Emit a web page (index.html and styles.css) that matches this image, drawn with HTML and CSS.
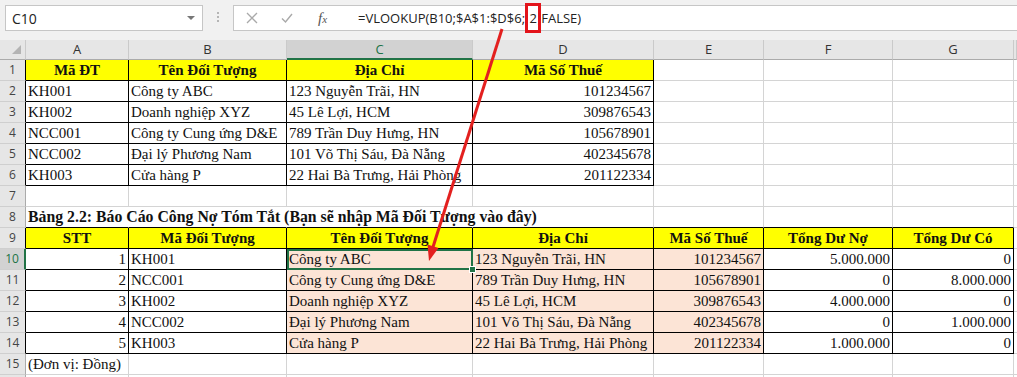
FILE: index.html
```html
<!DOCTYPE html>
<html lang="vi">
<head>
    <meta charset="UTF-8">
    <meta name="viewport" content="width=device-width, initial-scale=1.0">
    <title>Báo Cáo Công Nợ - VLOOKUP</title>
    <link rel="stylesheet" href="styles.css">
</head>
<body>

    <div class="page">
        <!-- Formula bar -->
        <div class="toolbar">
            <div class="name-box">
                <span>C10</span>
                <span class="caret"></span>
            </div>
            <div class="grip"><i></i><i></i><i></i></div>
            <div class="formula">
                <svg class="btn-x" width="12" height="12" viewBox="0 0 12 12"><path d="M1 1L11 11M11 1L1 11" stroke="#a9a9a9" stroke-width="1.3" fill="none"/></svg>
                <svg class="btn-ok" width="12" height="12" viewBox="0 0 12 12"><path d="M1 6.5L4.5 10L11 2" stroke="#a9a9a9" stroke-width="1.4" fill="none"/></svg>
                <span class="fx"><i>f</i><i class="x">x</i></span>
                <span class="ftext">=VLOOKUP(B10;$A$1:$D$6; <span class="hl">2</span>;FALSE)</span>
            </div>
        </div>

        <!-- Sheet -->
        <div class="sheet">
            <div class="row">
                <div class="ch corner"><span class="tri"></span></div>
                <div class="ch">A</div>
                <div class="ch">B</div>
                <div class="ch active">C</div>
                <div class="ch">D</div>
                <div class="ch">E</div>
                <div class="ch">F</div>
                <div class="ch">G</div>
                <div class="ch"></div>
            </div>

            <div class="row">
                <div class="c rh k">1</div>
                <div class="c b y">Mã ĐT</div>
                <div class="c b y">Tên Đối Tượng</div>
                <div class="c b y">Địa Chỉ</div>
                <div class="c b y">Mã Số Thuế</div>
                <div class="c"></div><div class="c"></div><div class="c"></div><div class="c"></div>
            </div>
            <div class="row">
                <div class="c rh k">2</div>
                <div class="c b">KH001</div>
                <div class="c b">Công ty ABC</div>
                <div class="c b">123 Nguyễn Trãi, HN</div>
                <div class="c b r">101234567</div>
                <div class="c"></div><div class="c"></div><div class="c"></div><div class="c"></div>
            </div>
            <div class="row">
                <div class="c rh k">3</div>
                <div class="c b">KH002</div>
                <div class="c b">Doanh nghiệp XYZ</div>
                <div class="c b">45 Lê Lợi, HCM</div>
                <div class="c b r">309876543</div>
                <div class="c"></div><div class="c"></div><div class="c"></div><div class="c"></div>
            </div>
            <div class="row">
                <div class="c rh k">4</div>
                <div class="c b">NCC001</div>
                <div class="c b">Công ty Cung ứng D&amp;E</div>
                <div class="c b">789 Trần Duy Hưng, HN</div>
                <div class="c b r">105678901</div>
                <div class="c"></div><div class="c"></div><div class="c"></div><div class="c"></div>
            </div>
            <div class="row">
                <div class="c rh k">5</div>
                <div class="c b">NCC002</div>
                <div class="c b">Đại lý Phương Nam</div>
                <div class="c b">101 Võ Thị Sáu, Đà Nẵng</div>
                <div class="c b r">402345678</div>
                <div class="c"></div><div class="c"></div><div class="c"></div><div class="c"></div>
            </div>
            <div class="row">
                <div class="c rh k">6</div>
                <div class="c b">KH003</div>
                <div class="c b">Cửa hàng P</div>
                <div class="c b">22 Hai Bà Trưng, Hải Phòng</div>
                <div class="c b r">201122334</div>
                <div class="c"></div><div class="c"></div><div class="c"></div><div class="c"></div>
            </div>
            <div class="row">
                <div class="c rh">7</div>
                <div class="c"></div><div class="c"></div><div class="c"></div><div class="c"></div>
                <div class="c"></div><div class="c"></div><div class="c"></div><div class="c"></div>
            </div>
            <div class="row">
                <div class="c rh">8</div>
                <div class="c bb ov title">Bảng 2.2: Báo Cáo Công Nợ Tóm Tắt (Bạn sẽ nhập Mã Đối Tượng vào đây)</div>
                <div class="c bb ov"></div>
                <div class="c bb ov"></div>
                <div class="c bb"></div>
                <div class="c bb"></div>
                <div class="c bb"></div>
                <div class="c bb"></div>
                <div class="c"></div>
            </div>

            <div class="row">
                <div class="c rh k">9</div>
                <div class="c b y">STT</div>
                <div class="c b y">Mã Đối Tượng</div>
                <div class="c b y">Tên Đối Tượng</div>
                <div class="c b y">Địa Chỉ</div>
                <div class="c b y">Mã Số Thuế</div>
                <div class="c b y">Tổng Dư Nợ</div>
                <div class="c b y">Tổng Dư Có</div>
                <div class="c"></div>
            </div>
            <div class="row">
                <div class="c rh k active">10</div>
                <div class="c b r">1</div>
                <div class="c b">KH001</div>
                <div class="c b p sel">Công ty ABC</div>
                <div class="c b p">123 Nguyễn Trãi, HN</div>
                <div class="c b p r">101234567</div>
                <div class="c b r">5.000.000</div>
                <div class="c b r">0</div>
                <div class="c"></div>
            </div>
            <div class="row">
                <div class="c rh k">11</div>
                <div class="c b r">2</div>
                <div class="c b">NCC001</div>
                <div class="c b p">Công ty Cung ứng D&amp;E</div>
                <div class="c b p">789 Trần Duy Hưng, HN</div>
                <div class="c b p r">105678901</div>
                <div class="c b r">0</div>
                <div class="c b r">8.000.000</div>
                <div class="c"></div>
            </div>
            <div class="row">
                <div class="c rh k">12</div>
                <div class="c b r">3</div>
                <div class="c b">KH002</div>
                <div class="c b p">Doanh nghiệp XYZ</div>
                <div class="c b p">45 Lê Lợi, HCM</div>
                <div class="c b p r">309876543</div>
                <div class="c b r">4.000.000</div>
                <div class="c b r">0</div>
                <div class="c"></div>
            </div>
            <div class="row">
                <div class="c rh k">13</div>
                <div class="c b r">4</div>
                <div class="c b">NCC002</div>
                <div class="c b p">Đại lý Phương Nam</div>
                <div class="c b p">101 Võ Thị Sáu, Đà Nẵng</div>
                <div class="c b p r">402345678</div>
                <div class="c b r">0</div>
                <div class="c b r">1.000.000</div>
                <div class="c"></div>
            </div>
            <div class="row">
                <div class="c rh k">14</div>
                <div class="c b r">5</div>
                <div class="c b">KH003</div>
                <div class="c b p">Cửa hàng P</div>
                <div class="c b p">22 Hai Bà Trưng, Hải Phòng</div>
                <div class="c b p r">201122334</div>
                <div class="c b r">1.000.000</div>
                <div class="c b r">0</div>
                <div class="c"></div>
            </div>
            <div class="row">
                <div class="c rh">15</div>
                <div class="c">(Đơn vị: Đồng)</div>
                <div class="c"></div><div class="c"></div><div class="c"></div>
                <div class="c"></div><div class="c"></div><div class="c"></div><div class="c"></div>
            </div>
            <div class="row">
                <div class="c rh"></div>
                <div class="c"></div><div class="c"></div><div class="c"></div><div class="c"></div>
                <div class="c"></div><div class="c"></div><div class="c"></div><div class="c"></div>
            </div>
        </div>

        <!-- Red arrow from the formula argument down to the selected cell -->
        <svg class="arrow" width="1017" height="377" viewBox="0 0 1017 377">
            <line x1="502" y1="29" x2="433" y2="247" stroke="#e3201f" stroke-width="3"/>
            <polygon points="429,261 438.5,248 427.5,244.5" fill="#e3201f"/>
        </svg>
    </div>

</body>
</html>
```

FILE: styles.css
```css
body {
    margin: 0;
    padding: 0;
    background-color: #f1f1f1;
}

.page {
    position: relative;
    width: 1017px;
    height: 377px;
    overflow: hidden;
    background-color: #f1f1f1;
}

/* formula bar */

.toolbar {
    display: flex;
    align-items: flex-start;
    height: 40px;
    padding: 5px 0 0 5px;
    box-sizing: border-box;
    font-family: "Open Sans", "Noto Sans", sans-serif;
}

.name-box {
    display: flex;
    align-items: center;
    justify-content: space-between;
    width: 198px;
    height: 26px;
    box-sizing: border-box;
    padding: 0 7px 0 6px;
    background-color: #fff;
    border: 1px solid #c6c6c6;
    font-size: 14px;
    color: #222;
}

.caret {
    width: 0;
    height: 0;
    border-left: 4px solid transparent;
    border-right: 4px solid transparent;
    border-top: 4px solid #777;
}

.grip {
    display: flex;
    flex-direction: column;
    gap: 2px;
    width: 30px;
    align-items: center;
    padding-top: 7px;
}

.grip i {
    width: 2px;
    height: 2px;
    background-color: #b5b5b5;
}

.formula {
    flex: 1;
    display: flex;
    align-items: center;
    height: 26px;
    box-sizing: border-box;
    background-color: #fff;
    border: 1px solid #c6c6c6;
    border-right: none;
}

.btn-x {
    margin-left: 12px;
}

.btn-ok {
    margin-left: 23px;
}

.fx {
    margin-left: 25px;
    width: 12px;
    font-family: "Liberation Serif", serif;
    color: #555;
}

.fx i {
    font-size: 15px;
}

.fx .x {
    font-size: 11px;
}

.ftext {
    margin-left: 28px;
    font-size: 13px;
    color: #222;
    white-space: nowrap;
}

.hl {
    outline: 3px solid #e3141b;
    padding: 3px 1px;
}

/* sheet */

.row {
    display: grid;
    grid-template-columns: 26px 103px 158px 186px 181px 110px 129px 121px 1fr;
}

.ch {
    height: 20px;
    box-sizing: border-box;
    background-color: #e6e6e6;
    border-right: 1px solid #cacaca;
    border-bottom: 1px solid #ababab;
    font-family: "Open Sans", "Noto Sans", sans-serif;
    font-size: 13px;
    line-height: 19px;
    text-align: center;
    color: #333;
}

.ch.active {
    background-color: #d2d2d2;
    color: #217346;
    border-bottom: 2px solid #217346;
}

.corner {
    display: flex;
    justify-content: flex-end;
    align-items: flex-end;
    padding: 0 4px 5px 0;
}

.tri {
    width: 9px;
    height: 9px;
    background-color: #b4b4b4;
    clip-path: polygon(100% 0, 100% 100%, 0 100%);
}

.c {
    height: 21px;
    box-sizing: border-box;
    padding: 0 2px;
    background-color: #fff;
    border-right: 1px solid #d4d4d4;
    border-bottom: 1px solid #d4d4d4;
    font-family: "Liberation Serif", "Times New Roman", serif;
    font-size: 15px;
    line-height: 20px;
    color: #111;
    white-space: nowrap;
}

.rh {
    padding: 0;
    background-color: #e6e6e6;
    border-right-color: #ababab;
    border-bottom-color: #cfcfcf;
    font-family: "Open Sans", "Noto Sans", sans-serif;
    font-size: 12px;
    text-align: center;
    color: #444;
}

.rh.k {
    border-right-color: #000;
}

.rh.active {
    background-color: #d2d2d2;
    color: #217346;
    border-right: 2px solid #217346;
}

.b {
    border-right-color: #000;
    border-bottom-color: #000;
}

.bb {
    border-bottom-color: #000;
}

.ov {
    border-right-color: transparent;
}

.y {
    background-color: #ffff00;
    font-weight: bold;
    text-align: center;
}

.p {
    background-color: #fce4d6;
}

.r {
    text-align: right;
}

.title {
    position: relative;
    z-index: 1;
    font-size: 15.8px;
    font-weight: bold;
}

.sel {
    position: relative;
    z-index: 1;
}

.sel::after {
    content: "";
    position: absolute;
    top: 0;
    left: 0;
    right: -1px;
    bottom: -1px;
    border: 2px solid #217346;
}

.sel::before {
    content: "";
    position: absolute;
    right: -4px;
    bottom: -4px;
    width: 5px;
    height: 5px;
    background-color: #217346;
    border: 1px solid #fff;
    z-index: 1;
}

.arrow {
    position: absolute;
    top: 0;
    left: 0;
    z-index: 2;
    pointer-events: none;
}
```
